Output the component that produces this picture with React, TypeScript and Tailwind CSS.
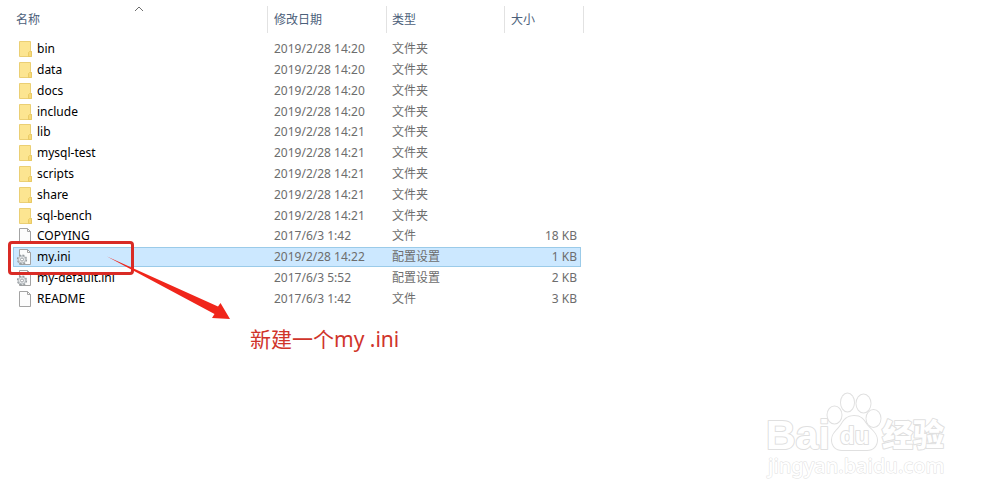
type Kind = "folder" | "file" | "config";

type Entry = {
    name: string;
    date: string;
    kind: Kind;
    size?: string;
    selected?: boolean;
};

const entries: Entry[] = [
    { name: "bin", date: "2019/2/28 14:20", kind: "folder" },
    { name: "data", date: "2019/2/28 14:20", kind: "folder" },
    { name: "docs", date: "2019/2/28 14:20", kind: "folder" },
    { name: "include", date: "2019/2/28 14:20", kind: "folder" },
    { name: "lib", date: "2019/2/28 14:21", kind: "folder" },
    { name: "mysql-test", date: "2019/2/28 14:21", kind: "folder" },
    { name: "scripts", date: "2019/2/28 14:21", kind: "folder" },
    { name: "share", date: "2019/2/28 14:21", kind: "folder" },
    { name: "sql-bench", date: "2019/2/28 14:21", kind: "folder" },
    { name: "COPYING", date: "2017/6/3 1:42", kind: "file", size: "18 KB" },
    { name: "my.ini", date: "2019/2/28 14:22", kind: "config", size: "1 KB", selected: true },
    { name: "my-default.ini", date: "2017/6/3 5:52", kind: "config", size: "2 KB" },
    { name: "README", date: "2017/6/3 1:42", kind: "file", size: "3 KB" },
];

const kindLabels: Record<Kind, string> = {
    folder: "文件夹",
    file: "文件",
    config: "配置设置",
};

function FolderIcon() {
    return (
        <svg width="16" height="16" viewBox="0 0 16 16" aria-hidden="true">
            <path d="M2.5.5h11v9.2l1 .8v5h-12z" fill="#fce591" stroke="#ebcf74" />
            <path d="M12.5 10.5h2v5h-3v-4z" fill="#f8d978" stroke="#e6c65f" strokeWidth=".8" />
        </svg>
    );
}

function FileIcon({ gear = false }: { gear?: boolean }) {
    return (
        <svg className="overflow-visible" width="16" height="16" viewBox="0 0 16 16" aria-hidden="true">
            <path d="M2.5.5h8l3 3v12h-11z" fill="#fcfcfc" stroke="#a3a3a3" />
            <path d="M10.5.5v3h3" fill="none" stroke="#a3a3a3" />
            {gear && (
                <g>
                    <circle cx="5" cy="10.5" r="4.4" fill="#e8eaec" stroke="#959b9f" strokeWidth="1.5" strokeDasharray="1.9 1.55" />
                    <circle cx="5" cy="10.5" r="3.6" fill="#e8eaec" stroke="#a2a8ac" strokeWidth=".8" />
                    <circle cx="5" cy="10.5" r="1.5" fill="#fff" stroke="#959b9f" strokeWidth=".9" />
                </g>
            )}
        </svg>
    );
}

function EntryRow({ entry }: { entry: Entry }) {
    const cell = entry.selected ? "border-y border-[#9bcbe9] bg-[#cce8ff]" : "border-y border-transparent";
    return (
        <tr className="leading-[18px] text-[#6d6d6d]">
            <td className={`${cell} border-l p-0`}>
                <div className="flex items-center gap-1 pl-[3px] text-black">
                    {entry.kind === "folder" ? <FolderIcon /> : <FileIcon gear={entry.kind === "config"} />}
                    {entry.name}
                </div>
            </td>
            <td className={`${cell} p-0 pl-[7px]`}>{entry.date}</td>
            <td className={`${cell} p-0 pl-1.5`}>{kindLabels[entry.kind]}</td>
            <td className={`${cell} border-r p-0 pr-[3px] text-right`}>{entry.size}</td>
            <td className="p-0" />
        </tr>
    );
}

function FileTable() {
    const head = "h-[27px] border-l border-[#e2e2e2] leading-[27px]";
    return (
        <table className="h-[309px] w-full max-w-[571px] table-fixed border-separate border-spacing-0 whitespace-nowrap">
            <colgroup>
                <col />
                <col className="w-[119px]" />
                <col className="w-[118px]" />
                <col className="w-[77px]" />
                <col className="w-[3px]" />
            </colgroup>
            <thead>
                <tr className="h-[39px] text-left align-top text-[#4c607a]">
                    <th scope="col" className="relative p-0 pt-1.5 font-normal">
                        <div className="pl-[3px] leading-[27px]">名称</div>
                        <svg className="absolute top-1.5 left-[121px]" width="10" height="6" viewBox="0 0 10 6" aria-hidden="true">
                            <path d="M1 5l4-4 4 4" fill="none" stroke="#6d6d6d" />
                        </svg>
                    </th>
                    <th scope="col" className="p-0 pt-1.5 font-normal">
                        <div className={`${head} pl-1.5`}>修改日期</div>
                    </th>
                    <th scope="col" className="p-0 pt-1.5 font-normal">
                        <div className={`${head} pl-[5px]`}>类型</div>
                    </th>
                    <th scope="col" colSpan={2} className="p-0 pt-1.5 font-normal">
                        <div className={`${head} border-r pl-1.5`}>大小</div>
                    </th>
                </tr>
            </thead>
            <tbody>
                {entries.map((entry) => (
                    <EntryRow key={entry.name} entry={entry} />
                ))}
            </tbody>
        </table>
    );
}

// Red frame, arrow and note drawn over the listing
function Annotation() {
    return (
        <>
            <div className="absolute top-[241px] left-2 h-[34px] w-[126px] rounded-sm border-3 border-[#d92b25]" />
            <svg className="absolute top-[250px] left-[100px]" width="140" height="75" viewBox="100 250 140 75" aria-hidden="true">
                <path d="M107 256.5L218 306.5L220.5 303L230 319L212 318L214.5 314z" fill="#f0261b" />
            </svg>
            <p className="absolute top-[325px] left-[250px] text-[21px] leading-7 text-[#d0342b]">新建一个my .ini</p>
        </>
    );
}

function Watermark() {
    return (
        <svg className="absolute right-[50px] bottom-4 overflow-visible" width="190" height="96" viewBox="760 388 190 96" role="img" aria-label="Baidu 经验">
            <g fill="#fff" stroke="#e0e0e0" strokeWidth="2" strokeLinejoin="round" paintOrder="stroke">
                <text className="font-['Liberation_Sans',sans-serif]" x="766" y="449" fontSize="41" fontWeight="700">Bai</text>
                <ellipse cx="834.5" cy="415" rx="7" ry="8.5" />
                <ellipse cx="847.5" cy="402.5" rx="6.5" ry="9" />
                <ellipse cx="863.5" cy="403.5" rx="7" ry="9" />
                <ellipse cx="873.5" cy="418.5" rx="7" ry="8.5" />
                <path d="M854 416c-7 0-10 4-13 9-4 6-9 8-9 15 0 6 4 10 10 10h25c6 0 10-4 10-10 0-7-6-10-10-15-4-6-6-9-13-9z" />
                <text className="font-['Liberation_Sans',sans-serif]" x="840" y="444" fontSize="24" fontWeight="700">du</text>
                <text x="882" y="446" fontSize="31" fontWeight="900">经验</text>
                <text x="768" y="473" fontSize="20" fontWeight="500" strokeWidth="1">jingyan.baidu.com</text>
            </g>
        </svg>
    );
}

export default function App() {
    return (
        <main className="relative min-h-screen bg-white pl-[13px] font-['Noto_Sans','Noto_Sans_CJK_SC',sans-serif] text-xs">
            <FileTable />
            <Annotation />
            <Watermark />
        </main>
    );
}
